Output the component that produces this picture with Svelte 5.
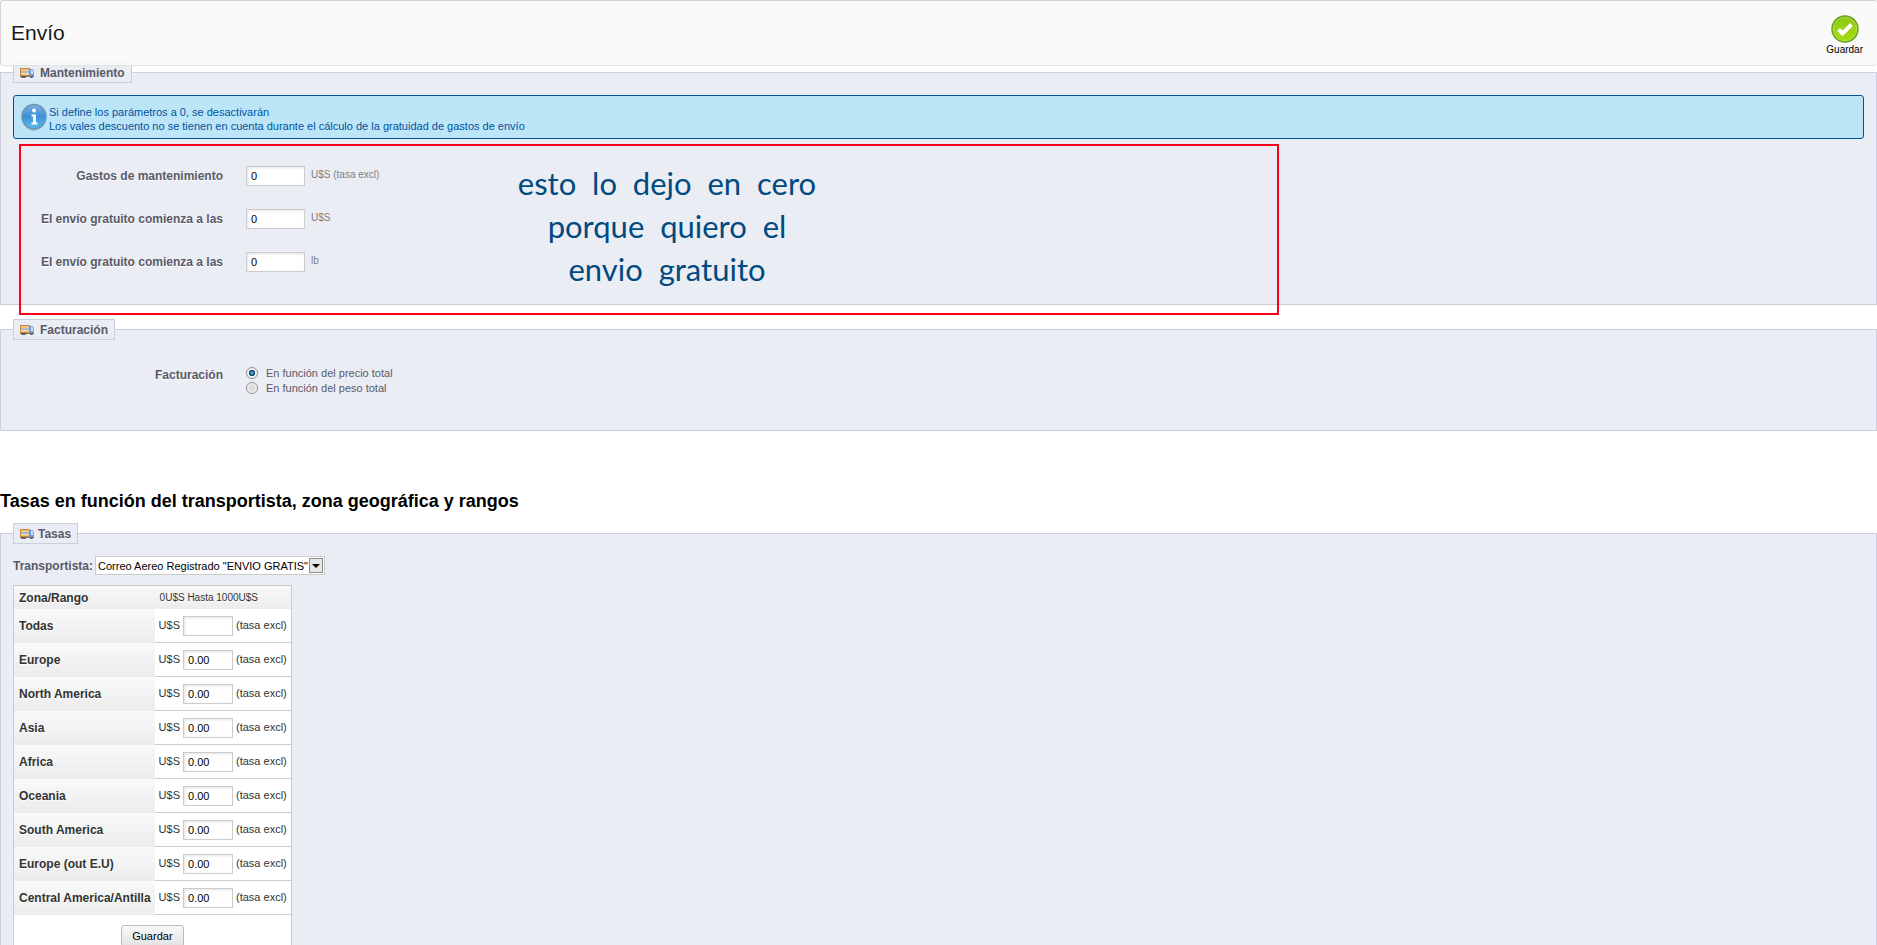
<script>
	let shipping = $state([
		{ id: 'handling', label: 'Gastos de mantenimiento', value: '0', unit: 'U$S (tasa excl)' },
		{ id: 'free-price', label: 'El envío gratuito comienza a las', value: '0', unit: 'U$S' },
		{ id: 'free-weight', label: 'El envío gratuito comienza a las', value: '0', unit: 'lb' }
	]);

	let billing = $state('price');

	let zones = $state([
		{ name: 'Todas', fee: '' },
		{ name: 'Europe', fee: '0.00' },
		{ name: 'North America', fee: '0.00' },
		{ name: 'Asia', fee: '0.00' },
		{ name: 'Africa', fee: '0.00' },
		{ name: 'Oceania', fee: '0.00' },
		{ name: 'South America', fee: '0.00' },
		{ name: 'Europe (out E.U)', fee: '0.00' },
		{ name: 'Central America/Antilla', fee: '0.00' }
	]);
</script>

{#snippet truck()}
	<svg width="14" height="12" viewBox="0 0 14 12" aria-hidden="true">
		<rect x="0" y="1" width="10" height="8" fill="#c8873a" />
		<rect x="1" y="2" width="8" height="6" fill="#f3c283" />
		<rect x="1" y="4" width="8" height="2" fill="#a9bccb" />
		<rect x="1" y="6" width="8" height="1" fill="#fadcae" />
		<path d="M10 2h2.500l1.500 2v5h-4z" fill="#6b9fe3" />
		<path d="M11 3h1.500l0.700 1.500v2.500h-2.200z" fill="#cfe2f8" />
		<rect x="0" y="9" width="14" height="1" fill="#77777c" />
		<rect x="1" y="9" width="5" height="2" rx="1" fill="#606066" />
		<rect x="10" y="9" width="3" height="2" rx="1" fill="#606066" />
	</svg>
{/snippet}

<header class="toolbar">
	<h1>Envío</h1>
	<button class="save" type="submit" form="shipping">
		<svg width="28" height="28" viewBox="0 0 28 28" aria-hidden="true">
			<defs>
				<linearGradient id="ok" x1="0" y1="0" x2="0" y2="1">
					<stop offset="0" stop-color="#8cc814" />
					<stop offset="1" stop-color="#a6dc12" />
				</linearGradient>
			</defs>
			<circle cx="14" cy="14" r="13" fill="url(#ok)" stroke="#69a51f" stroke-width="1.5" />
			<circle cx="14" cy="14" r="11.7" fill="none" stroke="#b5dc55" stroke-width="0.8" />
			<path d="M7.500 14.500l4 4 9-9" fill="none" stroke="#fff" stroke-width="4" />
		</svg>
		<span>Guardar</span>
	</button>
</header>

<form id="shipping" onsubmit={(e) => e.preventDefault()}>
	<fieldset class="handling">
		<legend>{@render truck()}Mantenimiento</legend>
		<div class="hint">
			<svg width="26" height="28" viewBox="0 0 26 28" aria-hidden="true">
				<defs>
					<linearGradient id="info" x1="0" y1="0" x2="0" y2="1">
						<stop offset="0" stop-color="#7db2df" />
						<stop offset="0.5" stop-color="#3f8fd6" />
						<stop offset="1" stop-color="#4fc3f2" />
					</linearGradient>
				</defs>
				<ellipse cx="13" cy="15" rx="12" ry="12.500" fill="#86a9bf" />
				<circle cx="13" cy="13.500" r="12" fill="url(#info)" stroke="#6d93b5" stroke-width="1.500" />
				<circle cx="13" cy="7.500" r="2" fill="#fff" />
				<path d="M10.500 11.500h4.500v8h1.500v2h-6v-2h1.500v-6h-1.500z" fill="#fff" />
			</svg>
			<p>
				Si define los parámetros a 0, se desactivarán<br />
				Los vales descuento no se tienen en cuenta durante el cálculo de la gratuidad de gastos de envío
			</p>
		</div>
		{#each shipping as field (field.id)}
			<div class="row">
				<label for={field.id}>{field.label}</label>
				<input id={field.id} type="text" bind:value={field.value} />
				<span class="unit">{field.unit}</span>
			</div>
		{/each}
		<div class="note">
			<p>esto&nbsp; lo&nbsp; dejo&nbsp; en&nbsp; cero<br />porque&nbsp; quiero&nbsp; el<br />envio&nbsp; gratuito</p>
		</div>
	</fieldset>

	<fieldset class="billing">
		<legend>{@render truck()}Facturación</legend>
		<div class="row" role="radiogroup" aria-labelledby="billing-label">
			<span class="label" id="billing-label">Facturación</span>
			<div class="options">
				<label><input type="radio" value="price" bind:group={billing} />En función del precio total</label>
				<label><input type="radio" value="weight" bind:group={billing} />En función del peso total</label>
			</div>
		</div>
	</fieldset>
</form>

<h2>Tasas en función del transportista, zona geográfica y rangos</h2>

<form onsubmit={(e) => e.preventDefault()}>
	<fieldset class="fees">
		<legend>{@render truck()}Tasas</legend>
		<div class="carrier">
			<label for="carrier">Transportista:</label>
			<div class="select">
				<select id="carrier">
					<option>Correo Aereo Registrado "ENVIO GRATIS"</option>
				</select>
				<svg width="14" height="15" viewBox="0 0 14 15" aria-hidden="true">
					<rect x="0.5" y="0.5" width="13" height="14" fill="#e6e6e6" stroke="#8c8c8c" />
					<path d="M3 6h8l-4 4z" fill="#000" />
				</svg>
			</div>
		</div>
		<table>
			<thead>
				<tr>
					<th scope="col">Zona/Rango</th>
					<th scope="col" class="range">0U$S Hasta 1000U$S</th>
				</tr>
			</thead>
			<tbody>
				{#each zones as zone (zone.name)}
					<tr>
						<th scope="row">{zone.name}</th>
						<td>
							<div class="fee">
								<span>U$S</span>
								<input type="text" aria-label={zone.name} bind:value={zone.fee} />
								<span>(tasa excl)</span>
							</div>
						</td>
					</tr>
				{/each}
			</tbody>
			<tfoot>
				<tr>
					<td colspan="2"><button class="button" type="submit">Guardar</button></td>
				</tr>
			</tfoot>
		</table>
	</fieldset>
</form>

<style>
	:global(body) {
		background: #fff;
		color: #000;
		font-family: "Liberation Sans", Arial, sans-serif;
		font-size: 11px;
	}

	input,
	select,
	button {
		box-sizing: border-box;
		margin: 0;
		font-family: inherit;
		font-size: 11px;
	}

	.toolbar {
		position: relative;
		z-index: 1;
		display: flex;
		align-items: center;
		justify-content: space-between;
		box-sizing: border-box;
		height: 66px;
		padding: 2px 14px 0 10px;
		border: 1px solid #d3d3d3;
		border-right: 0;
		border-bottom-color: #e2e2e2;
		border-radius: 3px;
		background: rgba(249, 249, 249, 0.9);
	}

	h1 {
		margin: 0;
		padding-bottom: 2px;
		color: #1a1a1a;
		font-size: 21px;
		font-weight: normal;
		line-height: 24px;
	}

	.save {
		display: flex;
		flex-direction: column;
		align-items: center;
		gap: 1px;
		padding: 2px 0 0;
		border: 0;
		background: none;
		font-size: 10px;
		line-height: 12px;
	}

	fieldset {
		position: relative;
		min-width: 0;
		margin: 0;
		padding: 0 12px;
		border: 1px solid #cccedb;
		background: #ebedf4;
	}

	legend {
		display: flex;
		align-items: center;
		gap: 6px;
		box-sizing: border-box;
		height: 21px;
		padding: 0 6px;
		border: 1px solid #cccedb;
		background: #ebedf4;
		color: #585a69;
		font-size: 12px;
		font-weight: bold;
	}

	.fees legend {
		gap: 4px;
	}

	.handling {
		box-sizing: border-box;
		height: 243px;
		margin-top: -4px;
	}

	.hint {
		display: flex;
		align-items: center;
		box-sizing: border-box;
		height: 44px;
		margin: 12px 0 26px;
		padding-left: 7px;
		border: 1px solid #0053a1;
		border-radius: 3px;
		background: #bde5f8;
		color: #0053a1;
	}

	.hint p {
		margin: 0;
		padding: 4px 0 0 2px;
		line-height: 14px;
	}

	.row {
		display: flex;
		align-items: center;
		height: 21px;
		margin-bottom: 22px;
	}

	.row > label,
	.label {
		width: 210px;
		margin-right: 23px;
		color: #585a69;
		font-size: 12px;
		font-weight: bold;
		text-align: right;
		text-shadow: 0 1px 0 #fff;
	}

	input[type='text'] {
		height: 20px;
		padding: 0 4px;
		border: 1px solid #ccc;
		background: #fff;
		box-shadow: inset 1px 1px 3px #e4e4e4;
		color: #000;
	}

	.row input[type='text'] {
		width: 59px;
	}

	.unit {
		margin-left: 6px;
		padding-bottom: 2px;
		color: #7f7f7f;
		font-size: 10px;
	}

	.note {
		position: absolute;
		z-index: 1;
		top: 61px;
		left: 18px;
		box-sizing: border-box;
		width: 1260px;
		height: 171px;
		border: 2px solid #ff001b;
		pointer-events: none;
	}

	.note p {
		width: 400px;
		margin: 16px 0 0 446px;
		color: #004a80;
		font-family: Lato, sans-serif;
		font-size: 31px;
		line-height: 43px;
		text-align: center;
	}

	.billing {
		box-sizing: border-box;
		height: 112px;
		margin-top: 14px;
	}

	.billing .row {
		align-items: flex-start;
		height: 30px;
		margin-top: 25px;
	}

	.label {
		padding-top: 3px;
	}

	.options label {
		display: flex;
		align-items: center;
		height: 15px;
		color: #585a69;
	}

	input[type='radio'] {
		width: 12px;
		height: 12px;
		margin-right: 8px;
		border: 1px solid #8e8f8f;
		border-radius: 50%;
		appearance: none;
		background: radial-gradient(circle, #dedede 40%, #fafafa 70%);
	}

	input[type='radio']:checked {
		background: radial-gradient(circle, #3aa5dd 0 10%, #0d3c5e 40%, #f4f4f4 50%);
	}

	h2 {
		margin: 59px 0 11px;
		font-size: 18px;
		line-height: 22px;
	}

	.carrier {
		display: flex;
		align-items: center;
		gap: 2px;
		height: 19px;
		margin: 12px 0 10px;
	}

	.carrier label {
		color: #585a69;
		font-size: 12px;
		font-weight: bold;
	}

	.select {
		position: relative;
		width: 230px;
	}

	select {
		display: block;
		width: 100%;
		height: 19px;
		padding: 0 0 0 2px;
		border: 1px solid #ccc;
		border-radius: 0;
		appearance: none;
		background: #fff;
		color: #000;
	}

	.select svg {
		position: absolute;
		top: 2px;
		right: 2px;
		pointer-events: none;
	}

	table {
		border: 1px solid #ccc;
		border-spacing: 0;
		background: #fff;
		color: #333;
	}

	th,
	td {
		box-sizing: border-box;
		padding: 0;
	}

	th {
		height: 34px;
		padding: 0 4px 0 5px;
		background: linear-gradient(#f9f9f9, #ececec);
		font-size: 12px;
		text-align: left;
		text-shadow: 0 1px 0 #fff;
	}

	thead th {
		height: 23px;
	}

	thead .range {
		font-size: 10px;
		font-weight: normal;
	}

	tbody td {
		height: 34px;
		padding: 0 4px;
		border-bottom: 1px solid #ccc;
	}

	.fee {
		display: flex;
		align-items: center;
		gap: 3px;
	}

	.fee span {
		padding-bottom: 2px;
	}

	.fee input {
		width: 50px;
	}

	tfoot td {
		padding: 10px 0;
		text-align: center;
	}

	.button {
		width: 63px;
		height: 22px;
		padding: 0;
		border: 1px solid #bbb;
		border-radius: 3px;
		background: linear-gradient(#f9f9f9, #e3e3e3);
		color: #000;
	}
</style>
